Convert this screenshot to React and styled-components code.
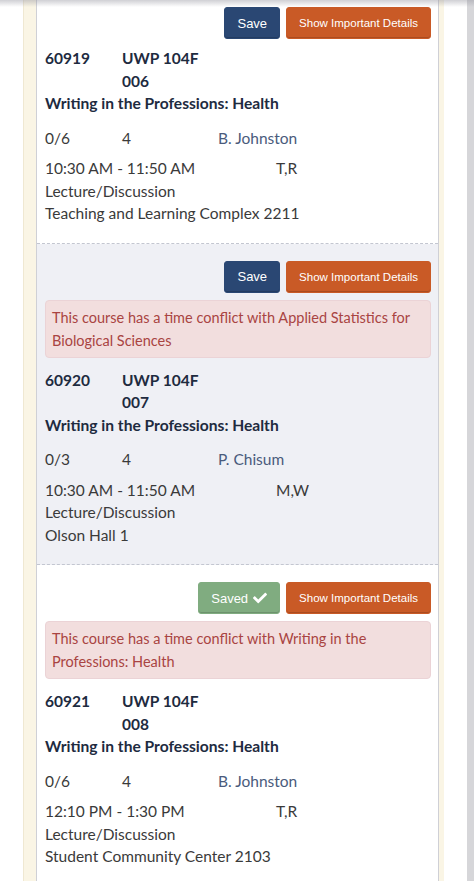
import React from 'react';
import styled, { createGlobalStyle } from 'styled-components';
import { FaCheck } from 'react-icons/fa';

const GlobalStyle = createGlobalStyle`
  *, *::before, *::after {
    box-sizing: border-box;
  }
  html, body {
    margin: 0;
    padding: 0;
    background: #ffffff;
    overflow: hidden;
  }
  body {
    font-family: Lato, "Open Sans", "Liberation Sans", sans-serif;
  }
`;

const Page = styled.div`
  position: relative;
  display: flex;
  height: 881px;
  overflow: hidden;
  padding-left: 23px;
`;

const TopShade = styled.div`
  position: absolute;
  top: 0;
  left: 0;
  right: 0;
  height: 7px;
  background: linear-gradient(to bottom, rgba(150, 150, 160, 0.45), rgba(150, 150, 160, 0));
  z-index: 2;
`;

const Cream = styled.div`
  background: #faf5e5;
  border-left: 1px solid #efe8d2;
  padding: 0 5px 0 12px;
  width: 421px;
  flex: none;
`;

const Card = styled.div`
  border-left: 1px solid #cfd0d6;
  border-right: 1px solid #cfd0d6;
  background: #ffffff;
  margin-top: -10px;
  height: calc(100% + 10px);
`;

const Gutter = styled.div`
  flex: 1;
  background: #ffffff;
  border-right: 7px solid #d6d6d9;
`;

const Section = styled.div`
  background: ${({ conflict }) => (conflict ? '#eff0f5' : '#ffffff')};
  border-bottom: 1px dashed #c3c6d0;
  padding: 17px 7px 18px 8px;
`;

const Actions = styled.div`
  display: flex;
  justify-content: flex-end;
  gap: 6px;
`;

const Button = styled.button`
  font-family: "Liberation Sans", Arial, sans-serif;
  font-size: ${({ small }) => (small ? '11.5px' : '13px')};
  color: #ffffff;
  height: 32px;
  padding: 0 12px;
  border-radius: 3px;
  border: 1px solid ${({ bg }) => bg};
  background: ${({ bg }) => bg};
  display: inline-flex;
  align-items: center;
  gap: 5px;
  cursor: pointer;
  box-shadow: inset 0 -1px 0 rgba(0, 0, 0, 0.15);
`;

const Alert = styled.div`
  margin-top: 7px;
  background: #f2dede;
  border: 1px solid #ebd3d6;
  border-radius: 4px;
  color: #a94442;
  font-size: 14.5px;
  line-height: 23px;
  padding: 5px 7px 5px 6px;
`;

const Info = styled.div`
  margin-top: ${({ conflict }) => (conflict ? '11px' : '8px')};
  color: #3a3a3a;
  font-size: 15.5px;
`;

const Row = styled.div`
  display: grid;
  grid-template-columns: ${({ cols }) => cols};
  line-height: 22.5px;
`;

const Strong = styled.div`
  font-weight: 700;
  color: #1e2b3f;
`;

const Title = styled.div`
  font-weight: 700;
  color: #1e2b3f;
  font-size: 15.6px;
  line-height: 22.5px;
`;

const Meta = styled(Row)`
  margin-top: 12px;
`;

const Schedule = styled(Row)`
  margin-top: 8px;
`;

const Link = styled.span`
  color: #4a5b7c;
`;

const Line = styled.div`
  line-height: 22.5px;
`;

const courses = [
  {
    crn: '60919', code: 'UWP 104F', sec: '006', seats: '0/6', units: '4',
    instructor: 'B. Johnston', time: '10:30 AM - 11:50 AM', days: 'T,R',
    room: 'Teaching and Learning Complex 2211', saved: false, conflict: null,
  },
  {
    crn: '60920', code: 'UWP 104F', sec: '007', seats: '0/3', units: '4',
    instructor: 'P. Chisum', time: '10:30 AM - 11:50 AM', days: 'M,W',
    room: 'Olson Hall 1', saved: false,
    conflict: 'Applied Statistics for Biological Sciences', shaded: true,
  },
  {
    crn: '60921', code: 'UWP 104F', sec: '008', seats: '0/6', units: '4',
    instructor: 'B. Johnston', time: '12:10 PM - 1:30 PM', days: 'T,R',
    room: 'Student Community Center 2103', saved: true,
    conflict: 'Writing in the Professions: Health',
  },
];

function Course({ c }) {
  return (
    <Section conflict={c.shaded}>
      <Actions>
        {c.saved ? (
          <Button bg="#80ac80">Saved <FaCheck size={14} /></Button>
        ) : (
          <Button bg="#2a4773">Save</Button>
        )}
        <Button small bg="#c95a26">Show Important Details</Button>
      </Actions>
      {c.conflict && (
        <Alert>This course has a time conflict with {c.conflict}</Alert>
      )}
      <Info conflict={!!c.conflict}>
        <Row cols="77px 1fr">
          <Strong>{c.crn}</Strong>
          <div>
            <Strong>{c.code}</Strong>
            <Strong>{c.sec}</Strong>
          </div>
        </Row>
        <Title>Writing in the Professions: Health</Title>
        <Meta cols="77px 96px 1fr">
          <div>{c.seats}</div>
          <div>{c.units}</div>
          <Link>{c.instructor}</Link>
        </Meta>
        <Schedule cols="231px 1fr">
          <div>{c.time}</div>
          <div>{c.days}</div>
        </Schedule>
        <Line>Lecture/Discussion</Line>
        <Line>{c.room}</Line>
      </Info>
    </Section>
  );
}

export default function App() {
  return (
    <>
      <GlobalStyle />
      <Page>
        <TopShade />
        <Cream>
          <Card>
            {courses.map((c) => (
              <Course key={c.crn} c={c} />
            ))}
          </Card>
        </Cream>
        <Gutter />
      </Page>
    </>
  );
}
